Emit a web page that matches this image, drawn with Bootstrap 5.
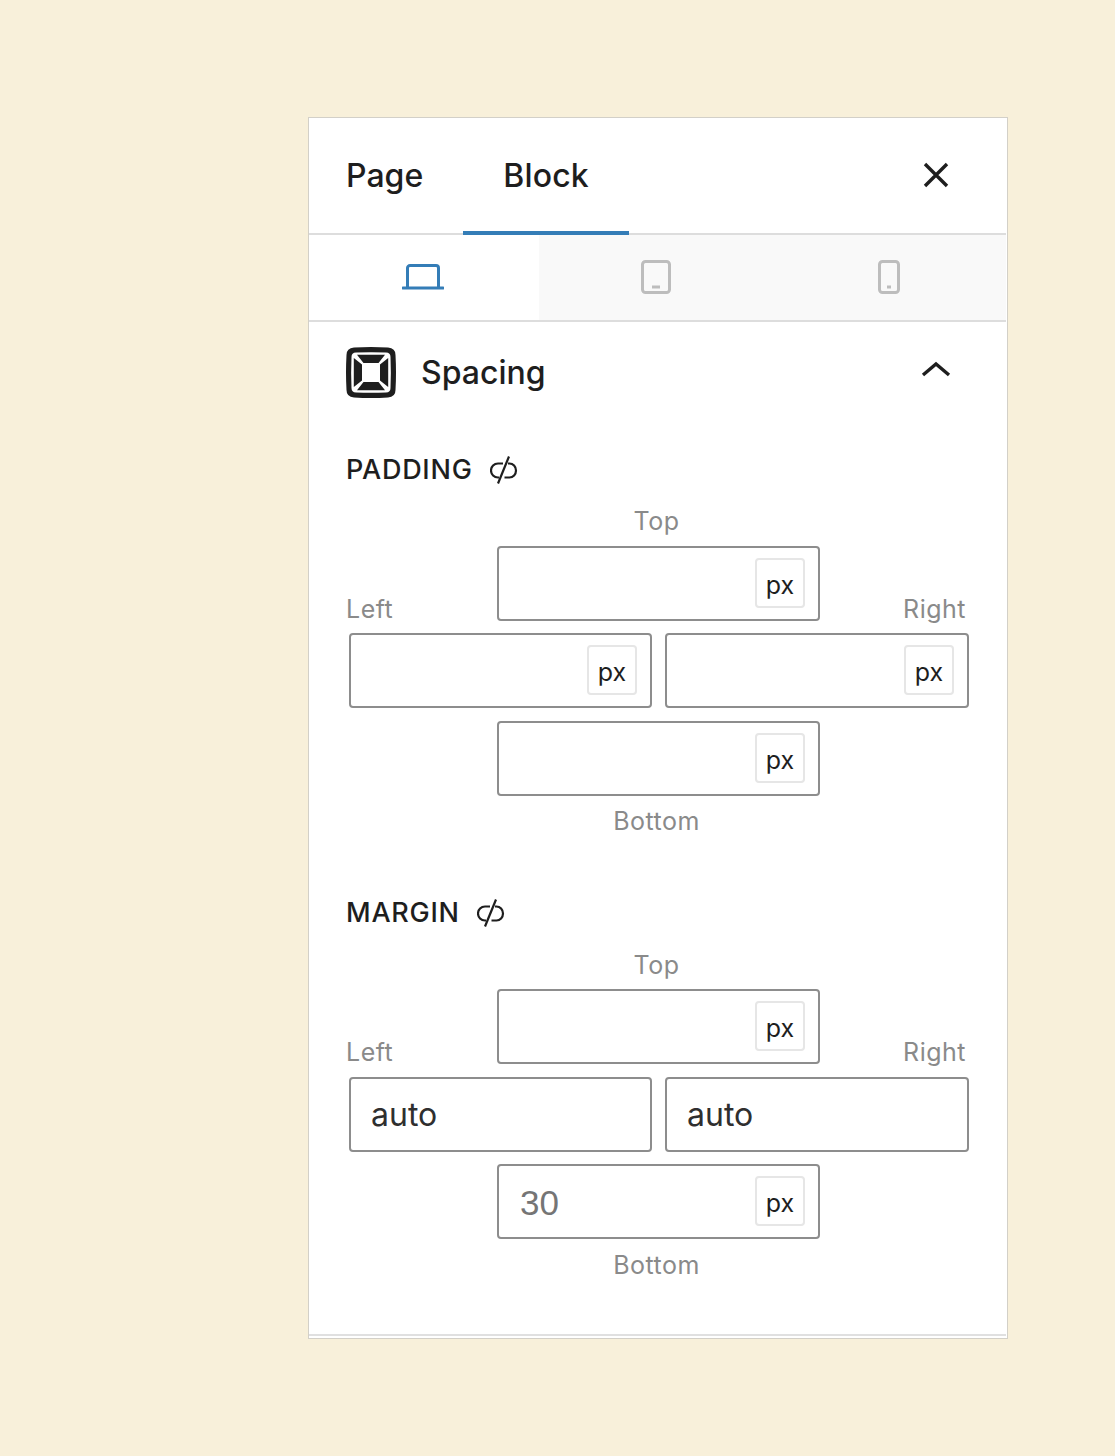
<!DOCTYPE html>
<html lang="en">
<head>
<meta charset="utf-8">
<title>Spacing</title>
<link href="https://cdn.jsdelivr.net/npm/bootstrap@5.3.0/dist/css/bootstrap.min.css" rel="stylesheet">
<style>
html,body{margin:0;height:1456px;overflow:hidden}
body{background:#f8f0da;font-family:Inter,"Noto Sans",sans-serif;color:#1e1e1e;padding:117px 0 0 308px}
.sp-panel{width:700px;height:1222px;background:#fff;border:1px solid #d3d0c8;padding:0 1px 2px 0;display:flex;flex-direction:column}
.sp-tabs{height:117px;border-bottom:2px solid #ddd;flex-wrap:nowrap;align-items:stretch;flex:none}
.sp-tab{font-size:32px;font-weight:500;line-height:116px;color:#1e1e1e;padding:0 40px;height:117px;letter-spacing:.2px}
.sp-tab:hover{color:#1e1e1e}
.sp-tab-first{padding-left:37px;letter-spacing:0}
.sp-tab-active{border-bottom:4px solid #347db7}
.sp-close{margin-left:auto;margin-right:57px;width:26px;display:flex;align-items:center;height:113px}
.sp-devices{height:87px;border-bottom:2px solid #ddd;background:#f9f9f9;flex:none}
.sp-dev{flex:1 1 0;display:flex;align-items:center;justify-content:center;padding:0 0 2px;background:none;border:0}
.sp-dev-on{flex:0 0 230px;background:#fff;padding-right:2px}
.sp-body{flex:1 1 0;min-height:0;padding:25px 37px 0 37px}
.sp-title-row{height:50px}
.sp-title{font-size:32px;font-weight:500;margin:2px 0 0 25px;line-height:50px}
.sp-chev{margin-left:auto;margin-right:18px;margin-bottom:6px}
.sp-block{margin-top:53px;margin-bottom:60px}
.sp-block+.sp-block{margin-top:0;margin-bottom:0}
.sp-head{height:40px;display:flex;align-items:center;gap:17px;font-size:27px;font-weight:500;margin:0 0 19px;line-height:40px;letter-spacing:.75px}
.sp-block+.sp-block .sp-head{margin-bottom:20px}
.sp-cap{font-size:25px;color:#8a8a8a;line-height:24px;letter-spacing:.5px}
.sp-center{text-align:center;width:323px;margin-left:151px}
.sp-capc{text-align:center;width:319px;margin-left:151px}
.sp-topcap{margin-bottom:13px}
.sp-block+.sp-block .sp-topcap{margin-bottom:12px}
.sp-row{display:flex;align-items:flex-end}
.sp-side{width:151px;flex:none}
.sp-side-r{flex:1;text-align:right;padding-right:3px}
.sp-box{height:75px;border:2px solid #8d8d8d;border-radius:4px;display:flex;align-items:center;background:#fff;padding-right:13px}
.sp-box-c{width:323px;flex:none}
.sp-pair{display:flex;gap:13px;margin:12px 0 13px 3px}
.sp-block+.sp-block .sp-pair{margin:13px 0 12px 3px}
.sp-pair .sp-box{width:303px}
.sp-pair .sp-box+.sp-box{width:304px}
.sp-input{flex:1;min-width:0;border:0;background:none;box-shadow:none;font-size:32px;color:#2f2f2f;padding:0 0 0 20px;height:60px;font-family:Inter,sans-serif}
.sp-input:focus{box-shadow:none}
.sp-input::placeholder{color:#757575;font-family:"Liberation Sans",sans-serif;font-size:35px}
.sp-num{padding:4px 0 0 21px}
.sp-unit{flex:none;width:50px;height:50px;margin-top:-1px;border:2px solid #e6e6e6;border-radius:4px;font-size:25px;line-height:50px;text-align:center;color:#1e1e1e}
.sp-gapcap{margin-top:13px}
.sp-block+.sp-block .sp-gapcap{margin-top:14px}
.sp-foot{height:2px;background:#e0e0e0;flex:none}
</style>
</head>
<body>
<div class="sp-panel">
  <ul class="nav sp-tabs">
    <li class="nav-item"><a class="nav-link sp-tab sp-tab-first" href="#">Page</a></li>
    <li class="nav-item"><a class="nav-link sp-tab sp-tab-active" href="#">Block</a></li>
    <li class="sp-close">
      <svg width="26" height="26" viewBox="0 0 26 26" fill="none" stroke="#1e1e1e" stroke-width="3.4" aria-hidden="true"><path d="M2 2 24 24M24 2 2 24"/></svg>
    </li>
  </ul>
  <div class="d-flex sp-devices">
    <button class="sp-dev sp-dev-on" type="button" aria-label="Desktop">
      <svg width="42" height="26" viewBox="0 0 42 26" fill="none" stroke="#347db7" stroke-width="3" aria-hidden="true"><path d="M5.500 23V4A2.500 2.500 0 0 1 8 1.500H34A2.500 2.500 0 0 1 36.500 4V23"/><path d="M1 24H41" stroke-linecap="round"/></svg>
    </button>
    <button class="sp-dev" type="button" aria-label="Tablet">
      <svg width="30" height="34" viewBox="0 0 30 34" fill="none" stroke="#bdbdbd" stroke-width="3" aria-hidden="true"><rect x="1.500" y="1.500" width="27" height="31" rx="3"/><path d="M11 27H19"/></svg>
    </button>
    <button class="sp-dev" type="button" aria-label="Mobile">
      <svg width="22" height="34" viewBox="0 0 22 34" fill="none" stroke="#bdbdbd" stroke-width="3" aria-hidden="true"><rect x="1.500" y="1.500" width="19" height="31" rx="3"/><path d="M9 27H13"/></svg>
    </button>
  </div>
  <div class="sp-body">
    <div class="d-flex align-items-center sp-title-row">
      <svg width="50" height="51" viewBox="0 0 50 51" aria-hidden="true">
        <path fill="#1e1e1e" d="M8 .5Q25-.5 42 .5 49.500 1 49.500 8 50.500 25.500 49.500 43 49.500 50 42 50.500 25 51.500 8 50.500 .5 50 .5 43-.5 25.500 .5 8 .5 1 8 .5Z"/>
        <path fill="#fff" d="M10 5.500Q25 4.800 40 5.500 44.500 5.700 44.500 10 45.200 25.500 44.500 41 44.500 45.300 40 45.500 25 46.200 10 45.500 5.500 45.300 5.500 41 4.800 25.500 5.500 10 5.500 5.700 10 5.500Z"/>
        <path fill="#1e1e1e" d="M11 7.800H39L32.500 16H17.500ZM11 43.200H39L32.500 35H17.500ZM7.800 11V40L16 33.500V17.500ZM42.200 11V40L34 33.500V17.500Z"/>
      </svg>
      <h2 class="sp-title">Spacing</h2>
      <svg class="sp-chev" width="30" height="16" viewBox="0 0 30 16" fill="none" stroke="#1e1e1e" stroke-width="3.400" aria-hidden="true"><path d="M2 14 15 3 28 14"/></svg>
    </div>

    <section class="sp-block">
      <h3 class="sp-head">PADDING
        <svg width="28" height="28" viewBox="0 0 28 28" fill="none" stroke="#1e1e1e" stroke-width="2.200" aria-hidden="true"><path d="M13 7.500H8A7 7 0 0 0 8 21.500H9"/><path d="M18 7.500H19.500A6.500 7 0 0 1 19.500 21.500H14.500"/><path d="M19 .5 8 27.500"/></svg>
      </h3>
      <div class="sp-cap sp-capc sp-topcap">Top</div>
      <div class="sp-row">
        <div class="sp-cap sp-side">Left</div>
        <div class="sp-box sp-box-c"><input class="form-control sp-input" aria-label="Top"><span class="sp-unit">px</span></div>
        <div class="sp-cap sp-side-r">Right</div>
      </div>
      <div class="sp-pair">
        <div class="sp-box"><input class="form-control sp-input" aria-label="Left"><span class="sp-unit">px</span></div>
        <div class="sp-box"><input class="form-control sp-input" aria-label="Right"><span class="sp-unit">px</span></div>
      </div>
      <div class="sp-box sp-box-c sp-center"><input class="form-control sp-input" aria-label="Bottom"><span class="sp-unit">px</span></div>
      <div class="sp-cap sp-capc sp-gapcap">Bottom</div>
    </section>

    <section class="sp-block">
      <h3 class="sp-head">MARGIN
        <svg width="28" height="28" viewBox="0 0 28 28" fill="none" stroke="#1e1e1e" stroke-width="2.200" aria-hidden="true"><path d="M13 7.500H8A7 7 0 0 0 8 21.500H9"/><path d="M18 7.500H19.500A6.500 7 0 0 1 19.500 21.500H14.500"/><path d="M19 .5 8 27.500"/></svg>
      </h3>
      <div class="sp-cap sp-capc sp-topcap">Top</div>
      <div class="sp-row">
        <div class="sp-cap sp-side">Left</div>
        <div class="sp-box sp-box-c"><input class="form-control sp-input" aria-label="Top"><span class="sp-unit">px</span></div>
        <div class="sp-cap sp-side-r">Right</div>
      </div>
      <div class="sp-pair">
        <div class="sp-box"><input class="form-control sp-input" aria-label="Left" value="auto"></div>
        <div class="sp-box"><input class="form-control sp-input" aria-label="Right" value="auto"></div>
      </div>
      <div class="sp-box sp-box-c sp-center"><input class="form-control sp-input sp-num" aria-label="Bottom" placeholder="30"><span class="sp-unit">px</span></div>
      <div class="sp-cap sp-capc sp-gapcap">Bottom</div>
    </section>
  </div>
  <div class="sp-foot"></div>
</div>
<script src="https://cdn.jsdelivr.net/npm/bootstrap@5.3.0/dist/js/bootstrap.bundle.min.js"></script>
</body>
</html>
